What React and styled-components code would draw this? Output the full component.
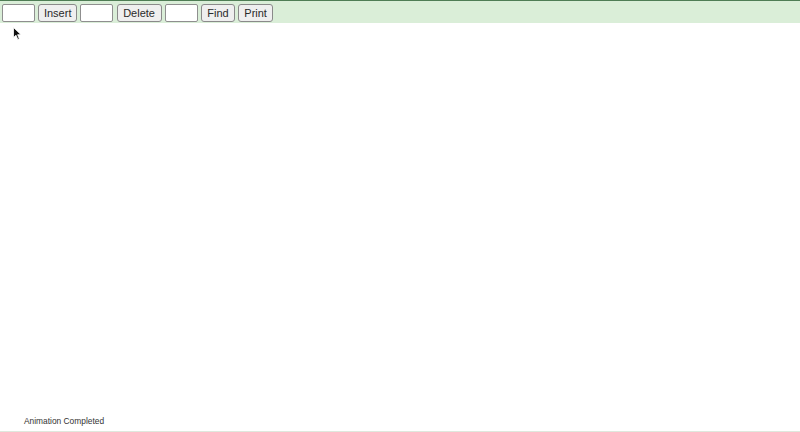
import React, { useState } from "react";
import styled, { createGlobalStyle } from "styled-components";

const GlobalStyle = createGlobalStyle`
  html, body {
    margin: 0;
    padding: 0;
    background: #ffffff;
  }
  body {
    font-family: "Liberation Sans", Arial, sans-serif;
  }
`;

const Page = styled.div`
  position: relative;
  width: 800px;
  height: 432px;
  display: flex;
  flex-direction: column;
  overflow: hidden;
  background: #ffffff;
`;

const Toolbar = styled.div`
  display: flex;
  align-items: center;
  gap: 3.2px;
  height: 23px;
  padding: 1px 2px 0;
  box-sizing: border-box;
  background: #daeed8;
  border-top: 1px solid #4f7d55;
`;

const Field = styled.input`
  box-sizing: border-box;
  width: 33px;
  height: 18px;
  margin: 0;
  padding: 0 2px;
  border: 1px solid #8f8f8f;
  border-radius: 2px;
  background: #ffffff;
  font-size: 12px;
`;

const Button = styled.button`
  box-sizing: border-box;
  width: ${(p) => p.$w}px;
  height: 18px;
  margin: 0;
  padding: 0;
  border: 1px solid #8a8a8a;
  border-radius: 3px;
  background: #efefef;
  color: #2a2a2a;
  font-family: "Liberation Sans", Arial, sans-serif;
  font-size: 11px;
  line-height: 16px;
`;

const Canvas = styled.div`
  flex: 1;
  display: flex;
  flex-direction: column;
  justify-content: flex-end;
`;

const Status = styled.div`
  padding: 0 0 5px 24px;
  font-family: "Liberation Sans", Arial, sans-serif;
  font-size: 8.4px;
  color: #333333;
`;

const BottomLine = styled.div`
  height: 1px;
  background: #dfe8dd;
`;

const Cursor = styled.svg`
  position: absolute;
  left: 13px;
  top: 27px;
`;

export default function App() {
  const [values, setValues] = useState({ insert: "", remove: "", find: "" });
  const set = (k) => (e) => setValues({ ...values, [k]: e.target.value });

  return (
    <>
      <GlobalStyle />
      <Page>
        <Toolbar>
          <Field value={values.insert} onChange={set("insert")} />
          <Button $w={39}>Insert</Button>
          <Field value={values.remove} onChange={set("remove")} />
          <Button $w={45}>Delete</Button>
          <Field value={values.find} onChange={set("find")} />
          <Button $w={34}>Find</Button>
          <Button $w={35}>Print</Button>
        </Toolbar>
        <Canvas>
          <Status>Animation Completed</Status>
          <BottomLine />
        </Canvas>
        <Cursor width="9" height="14" viewBox="0 0 9 14">
          <path
            d="M0.5 0.5 L0.5 10.5 L3 8.2 L4.8 12.5 L6.3 11.8 L4.6 7.7 L8 7.7 Z"
            fill="#111"
            stroke="#fff"
            strokeWidth="0.8"
          />
        </Cursor>
      </Page>
    </>
  );
}
